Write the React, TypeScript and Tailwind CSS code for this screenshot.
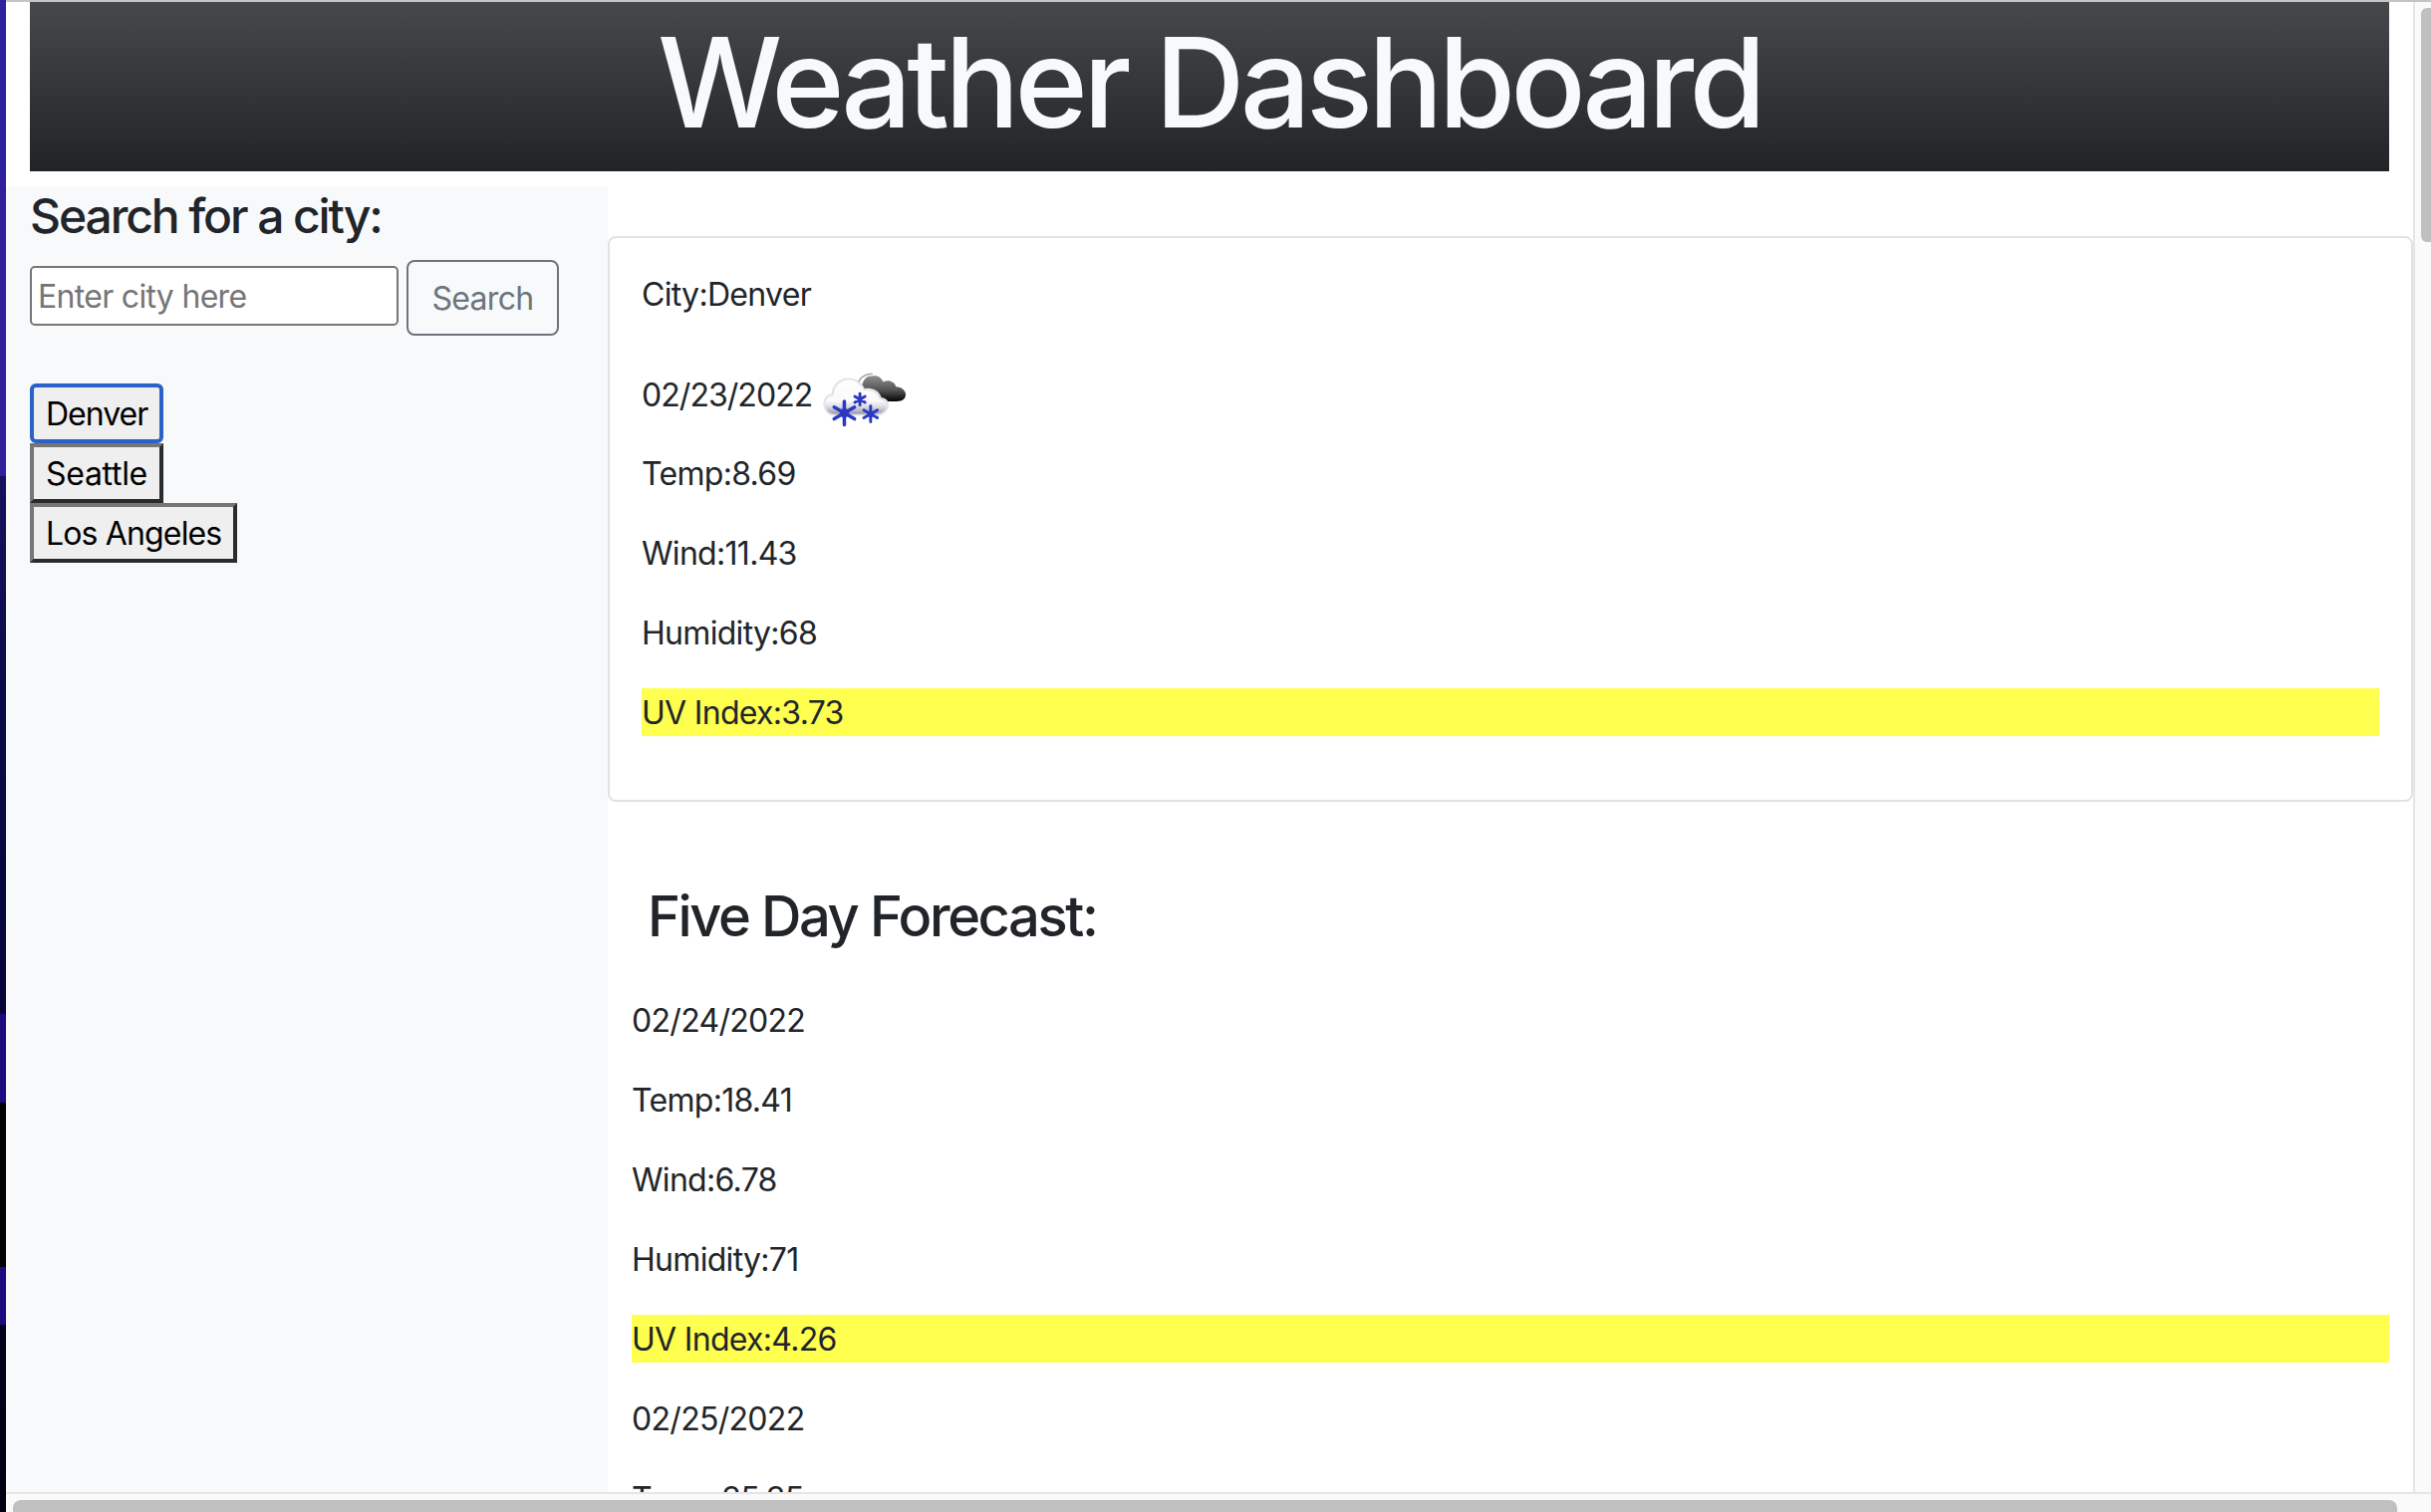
import React from 'react';

const font = "font-['Inter','Noto_Sans',sans-serif]";

function Flake({ x, y, r, w }: { x: number; y: number; r: number; w: number }) {
  const d = r * 0.87;
  const h = r * 0.5;
  return (
    <g stroke="#2a39c4" strokeWidth={w} strokeLinecap="round">
      <path d={`M${x} ${y - r} V${y + r} M${x - d} ${y - h} L${x + d} ${y + h} M${x + d} ${y - h} L${x - d} ${y + h}`} />
      <circle cx={x} cy={y} r={r * 0.4} fill="#2a39c4" stroke="none" />
    </g>
  );
}

function SnowIcon() {
  return (
    <svg width="86" height="56" viewBox="0 0 88 56" className="ml-[9px] mb-[-8px] shrink-0">
      <defs>
        <linearGradient id="darkCloud" x1="0" y1="0" x2="0" y2="1">
          <stop offset="0" stopColor="#8f8f8f" />
          <stop offset="0.55" stopColor="#555555" />
          <stop offset="1" stopColor="#050505" />
        </linearGradient>
        <linearGradient id="whiteCloud" x1="0" y1="0" x2="0" y2="1">
          <stop offset="0" stopColor="#ffffff" />
          <stop offset="0.62" stopColor="#fafafa" />
          <stop offset="0.8" stopColor="#d8d8e0" />
          <stop offset="1" stopColor="#9a9aa8" />
        </linearGradient>
        <filter id="soft" x="-10%" y="-10%" width="120%" height="120%">
          <feGaussianBlur stdDeviation="0.8" />
        </filter>
      </defs>
      <g filter="url(#soft)">
        <path d="M42 17 C42 8 47 3 53 4 C57 3 62 5 64 10 C69 7 76 10 77 15 C83 15 87 19 87 23 C87 28 83 30 78 30 L60 30 C50 27 44 22 42 17Z" fill="url(#darkCloud)" />
        <path d="M37 15 C38 7 45 1 53 2" fill="none" stroke="#a8a8a8" strokeWidth="1.6" />
        <path d="M3 36 C1 29 5 23 11 22 C11 13 19 6 28 6 C36 6 42 11 45 17 C52 15 60 19 62 26 C68 27 71 31 69 37 C67 43 62 45 57 45 L13 45 C8 45 4 41 3 36Z" fill="#e4e4e8" />
        <path d="M5 36 C3 29 7 25 13 24 C13 15 20 8 28 8 C36 8 41 13 44 19 C51 17 58 21 60 28 C66 29 69 32 67 37 C65 41 61 43 56 43 L14 43 C9 43 6 40 5 36Z" fill="url(#whiteCloud)" />
        <Flake x={24} y={42} r={12} w={3.6} />
        <Flake x={40} y={28} r={6} w={3} />
        <Flake x={51} y={43} r={8} w={3} />
      </g>
    </svg>
  );
}

function Line({ children }: { children: React.ReactNode }) {
  return <p className="mb-[32px] h-[48px] leading-[49px]">{children}</p>;
}

function Uv({ children }: { children: React.ReactNode }) {
  return <p className="mb-[32px] h-[48px] bg-[#ffff50] leading-[49px]">{children}</p>;
}

const plainCity = 'h-[60px] border-[4px] border-b-[#2b2b2b] border-l-[#767676] border-r-[#2b2b2b] border-t-[#767676] bg-[#efefef] px-[12px] pt-[2px] text-[32px] leading-none text-black';

const cities = [
  { name: 'Denver', className: 'h-[60px] rounded-[6px] border-[4px] border-[#2b62c8] bg-[#efefef] px-[12px] pt-[2px] text-[32px] leading-none tracking-[-1px] text-black' },
  { name: 'Seattle', className: `${plainCity} tracking-[-0.3px]` },
  { name: 'Los Angeles', className: `${plainCity} tracking-[-0.85px]` },
];

export default function App() {
  return (
    <div className={`flex h-[1518px] w-[2440px] overflow-hidden bg-white text-[32px] tracking-[-0.7px] text-[#212529] ${font}`}>
      {/* desktop wallpaper peeking out at the window edge */}
      <div className="w-[6px] shrink-0 bg-[linear-gradient(to_bottom,#30209c_0px,#30209c_478px,#16105e_478px,#0a0a48_700px,#05053a_1018px,#1e0a80_1018px,#1e0a80_1107px,#000000_1107px,#000000_1272px,#1e0a80_1272px,#1e0a80_1330px,#03021c_1330px,#000010_1518px)]" />

      <div className="flex min-w-0 flex-1 flex-col">
        <div className="h-[2px] shrink-0 bg-[#c4c4c4]" />
        <div className="flex min-h-0 flex-1">
          <div className="min-h-0 min-w-0 flex-1 overflow-hidden">
            <header className="mx-[24px] flex h-[170px] items-center justify-center bg-[linear-gradient(to_bottom,#47484c,#212327)] pb-[10px]">
              <h1 className="text-[125px] font-medium leading-none tracking-[-4.8px] text-[#f8f9fa]">Weather Dashboard</h1>
            </header>

            <div className="mt-[16px] flex items-start">
              <aside className="h-[1400px] w-[604px] shrink-0 bg-[#f8f9fa] pl-[24px]">
                <h4 className="h-[58px] text-[48px] font-[550] leading-[58px] tracking-[-2.1px]">Search for a city:</h4>
                <div className="mt-[15px] flex items-center gap-[8px]">
                  <input
                    readOnly
                    placeholder="Enter city here"
                    className="mb-[4px] h-[60px] w-[370px] rounded-[5px] border-2 border-[#767676] bg-white px-[6px] text-[32px] tracking-[-0.7px] text-[#212529] outline-none placeholder:text-[#757575]"
                  />
                  <button className="h-[76px] w-[153px] rounded-[8px] border-2 border-[#6c757d] pt-[2px] text-[32px] leading-[48px] text-[#6c757d]">Search</button>
                </div>
                <div className="mt-[48px] flex flex-col items-start">
                  {cities.map((city) => (
                    <button key={city.name} className={city.className}>
                      {city.name}
                    </button>
                  ))}
                </div>
              </aside>

              <main className="min-w-0 flex-1">
                <section className="mt-[49px] rounded-[8px] border-2 border-[#dfe3e7] bg-white p-[32px]">
                  <Line>City:Denver</Line>
                  <div className="mb-[30px] flex h-[70px] items-end">
                    <span className="h-[48px] leading-[48px] tracking-[-0.95px]">02/23/2022</span>
                    <SnowIcon />
                  </div>
                  <Line>Temp:8.69</Line>
                  <Line>Wind:11.43</Line>
                  <Line>Humidity:68</Line>
                  <Uv>UV Index:3.73</Uv>
                </section>

                <h3 className="mt-[82px] pl-[40px] text-[56px] font-[550] leading-[67px] tracking-[-2.4px]">Five Day Forecast:</h3>
                <div className="mt-[46px] px-[24px]">
                  <Line>02/24/2022</Line>
                  <Line>Temp:18.41</Line>
                  <Line>Wind:6.78</Line>
                  <Line>Humidity:71</Line>
                  <Uv>UV Index:4.26</Uv>
                  <Line>02/25/2022</Line>
                  <Line>Temp:35.35</Line>
                </div>
              </main>
            </div>
          </div>

          <div className="w-[18px] shrink-0 border-l-2 border-[#e5e5e5] bg-[#fafafa] pl-[6px] pt-[6px]">
            <div className="h-[235px] w-full rounded-l-[6px] bg-[#c0c0c0]" />
          </div>
        </div>

        <div className="flex h-[20px] shrink-0 items-start border-t-2 border-[#e5e5e5] bg-[#fafafa] pl-[7px] pt-[6px]">
          <div className="h-[12px] w-[2393px] rounded-t-[8px] bg-[#c0c0c0]" />
        </div>
      </div>
    </div>
  );
}
